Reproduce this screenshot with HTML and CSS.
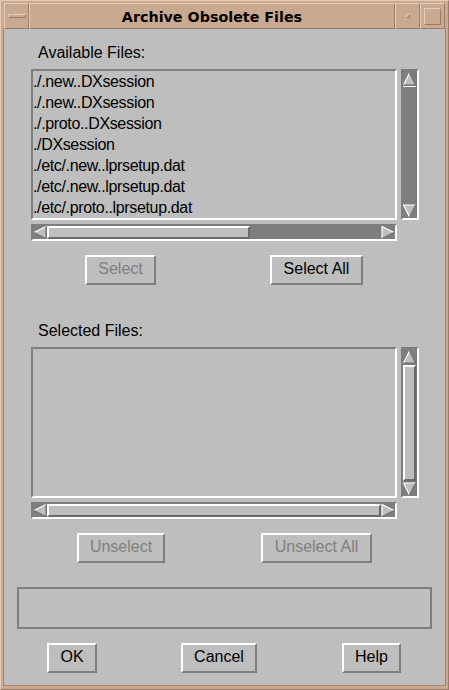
FILE: index.html
```html
<!DOCTYPE html>
<html>
<head>
<meta charset="utf-8">
<title>Archive Obsolete Files</title>
<link rel="stylesheet" href="styles.css">
</head>
<body>
<div class="window">
  <div class="titlebar">
    <div class="tb-btn tb-menu"><span class="menu-bar"></span></div>
    <div class="tb-btn tb-title">Archive Obsolete Files</div>
    <div class="tb-btn tb-min"><span class="min-dot"></span></div>
    <div class="tb-btn tb-max"><span class="max-box"></span></div>
  </div>
  <div class="content">
    <div class="label">Available Files:</div>
    <div class="listgroup">
      <div class="listrow">
        <div class="list">
          <div class="item">./.new..DXsession</div>
          <div class="item">./.new..DXsession</div>
          <div class="item">./.proto..DXsession</div>
          <div class="item">./DXsession</div>
          <div class="item">./etc/.new..lprsetup.dat</div>
          <div class="item">./etc/.new..lprsetup.dat</div>
          <div class="item">./etc/.proto..lprsetup.dat</div>
        </div>
        <div class="vscroll">
          <svg class="arr-v" width="13" height="14" viewBox="0 0 13 14"><polygon points="6.5,1 0.5,13 12.5,13" fill="#bebebe"/><polyline points="0.5,13 6.5,1" fill="none" stroke="#fff" stroke-width="1.2"/><polyline points="6.5,1 12.5,13 0.5,13" fill="none" stroke="#6a6a6a" stroke-width="1"/></svg>
          <div class="vtrough"><div class="vline"></div></div>
          <svg class="arr-v" width="13" height="14" viewBox="0 0 13 14"><polygon points="0.5,1 12.5,1 6.5,13" fill="#bebebe"/><polyline points="6.5,13 0.5,1 12.5,1" fill="none" stroke="#fff" stroke-width="1.2"/><polyline points="12.5,1 6.5,13" fill="none" stroke="#6a6a6a" stroke-width="1"/></svg>
        </div>
      </div>
      <div class="hscroll">
        <svg class="arr-h" width="14" height="13" viewBox="0 0 14 13"><polygon points="1,6.5 13,0.5 13,12.5" fill="#bebebe"/><polyline points="1,6.5 13,0.5" fill="none" stroke="#fff" stroke-width="1.2"/><polyline points="1,6.5 13,12.5 13,0.5" fill="none" stroke="#6a6a6a" stroke-width="1"/></svg>
        <div class="htrough"><div class="hslider hs-part"></div></div>
        <svg class="arr-h" width="14" height="13" viewBox="0 0 14 13"><polygon points="13,6.5 1,0.5 1,12.5" fill="#bebebe"/><polyline points="1,12.5 1,0.5 13,6.5" fill="none" stroke="#fff" stroke-width="1.2"/><polyline points="1,12.5 13,6.5" fill="none" stroke="#6a6a6a" stroke-width="1"/></svg>
      </div>
    </div>
    <div class="btnrow row1">
      <div class="btn disabled b-select">Select</div>
      <div class="btn b-selall">Select All</div>
    </div>

    <div class="label label2">Selected Files:</div>
    <div class="listgroup">
      <div class="listrow">
        <div class="list"></div>
        <div class="vscroll">
          <svg class="arr-v" width="13" height="14" viewBox="0 0 13 14"><polygon points="6.5,1 0.5,13 12.5,13" fill="#bebebe"/><polyline points="0.5,13 6.5,1" fill="none" stroke="#fff" stroke-width="1.2"/><polyline points="6.5,1 12.5,13 0.5,13" fill="none" stroke="#6a6a6a" stroke-width="1"/></svg>
          <div class="vtrough"><div class="vslider"></div></div>
          <svg class="arr-v" width="13" height="14" viewBox="0 0 13 14"><polygon points="0.5,1 12.5,1 6.5,13" fill="#bebebe"/><polyline points="6.5,13 0.5,1 12.5,1" fill="none" stroke="#fff" stroke-width="1.2"/><polyline points="12.5,1 6.5,13" fill="none" stroke="#6a6a6a" stroke-width="1"/></svg>
        </div>
      </div>
      <div class="hscroll">
        <svg class="arr-h" width="14" height="13" viewBox="0 0 14 13"><polygon points="1,6.5 13,0.5 13,12.5" fill="#bebebe"/><polyline points="1,6.5 13,0.5" fill="none" stroke="#fff" stroke-width="1.2"/><polyline points="1,6.5 13,12.5 13,0.5" fill="none" stroke="#6a6a6a" stroke-width="1"/></svg>
        <div class="htrough"><div class="hslider hs-full"></div></div>
        <svg class="arr-h" width="14" height="13" viewBox="0 0 14 13"><polygon points="13,6.5 1,0.5 1,12.5" fill="#bebebe"/><polyline points="1,12.5 1,0.5 13,6.5" fill="none" stroke="#fff" stroke-width="1.2"/><polyline points="1,12.5 13,6.5" fill="none" stroke="#6a6a6a" stroke-width="1"/></svg>
      </div>
    </div>
    <div class="btnrow row2">
      <div class="btn disabled b-unsel">Unselect</div>
      <div class="btn disabled b-unselall">Unselect All</div>
    </div>

    <div class="msgbox"></div>

    <div class="btnrow row3">
      <div class="btn b-ok">OK</div>
      <div class="btn b-cancel">Cancel</div>
      <div class="btn b-help">Help</div>
    </div>
  </div>
</div>
</body>
</html>
```
FILE: styles.css
```css
* { box-sizing: border-box; }
html, body { margin: 0; padding: 0; background: #c9a98f; }
body {
  font-family: "Liberation Sans", Arial, sans-serif;
  font-size: 16px;
  color: #000;
}
.window {
  width: 449px;
  height: 690px;
  background: #c9a98f;
  border: 1px solid;
  border-color: #e6cdb9 #9b7b65 #9b7b65 #e6cdb9;
  padding: 2px 3px 4px 3px;
}
.titlebar {
  display: flex;
  height: 26px;
}
.tb-btn {
  border: 1px solid;
  border-color: #e6cdb9 #9b7b65 #9b7b65 #e6cdb9;
  display: flex;
  align-items: center;
  justify-content: center;
}
.tb-menu, .tb-min, .tb-max { width: 25px; }
.tb-title {
  flex: 1;
  font-family: "DejaVu Sans", sans-serif;
  font-weight: bold;
  font-size: 14.3px;
  padding-top: 2px;
}
.menu-bar {
  width: 18px;
  height: 4px;
  border: 1px solid;
  border-color: #e6cdb9 #9b7b65 #9b7b65 #e6cdb9;
}
.min-dot {
  width: 4px;
  height: 4px;
  border: 1px solid;
  border-color: #e6cdb9 #9b7b65 #9b7b65 #e6cdb9;
}
.max-box {
  width: 17px;
  height: 17px;
  border: 1px solid;
  border-color: #e6cdb9 #9b7b65 #9b7b65 #e6cdb9;
}
.content {
  width: 441px;
  height: 656px;
  background: #bebebe;
  padding-top: 16px;
  box-shadow: 0 0 0 1px #a5856e;
}
.label {
  margin-left: 34px;
  height: 16px;
  line-height: 16px;
  white-space: nowrap;
}
.label2 { margin-top: 38px; }
.listgroup {
  margin: 8px 0 0 27px;
  width: 388px;
}
.listrow {
  display: flex;
  height: 151px;
  gap: 4px;
}
.list {
  width: 366px;
  border: 2px solid;
  border-color: #7e7e7e #fff #fff #7e7e7e;
  overflow: hidden;
}
.item {
  height: 21px;
  line-height: 21px;
  white-space: nowrap;
  letter-spacing: -0.35px;
}
.vscroll {
  width: 18px;
  background: #7e7e7e;
  border: 2px solid;
  border-color: #7e7e7e #fff #fff #7e7e7e;
  display: flex;
  flex-direction: column;
  padding-top: 1px;
}
.arr-v { display: block; flex: none; }
.vtrough { flex: 1; display: flex; flex-direction: column; }
.vline { height: 1px; background: #fff; width: 13px; }
.vslider {
  flex: 1;
  width: 13px;
  background: #bebebe;
  border: 2px solid;
  border-color: #fff #6a6a6a #6a6a6a #fff;
  margin: 1px 0;
}
.hscroll {
  margin-top: 4px;
  width: 366px;
  height: 17px;
  background: #7e7e7e;
  border: 2px solid;
  border-color: #7e7e7e #fff #fff #7e7e7e;
  display: flex;
  align-items: center;
}
.arr-h { display: block; flex: none; }
.htrough { flex: 1; height: 13px; display: flex; }
.hslider {
  height: 13px;
  background: #bebebe;
  border: 2px solid;
  border-color: #fff #6a6a6a #6a6a6a #fff;
}
.hs-part { width: 203px; }
.hs-full { flex: 1; }
.btnrow {
  display: flex;
  height: 30px;
  margin-top: 14px;
}
.btn {
  height: 30px;
  border: 2px solid;
  border-color: #fff #7e7e7e #7e7e7e #fff;
  text-align: center;
  line-height: 24px;
  padding-bottom: 2px;
  white-space: nowrap;
}
.disabled { color: #808080; }
.b-select { margin-left: 81px; width: 71px; }
.b-selall { margin-left: 114px; width: 93px; }
.b-unsel { margin-left: 73px; width: 88px; }
.b-unselall { margin-left: 96px; width: 111px; }
.msgbox {
  margin: 24px 0 0 13px;
  width: 415px;
  height: 42px;
  border: 2px solid #7e7e7e;
}
.b-ok { margin-left: 43px; width: 50px; }
.b-cancel { margin-left: 84px; width: 76px; }
.b-help { margin-left: 85px; width: 59px; }
```
